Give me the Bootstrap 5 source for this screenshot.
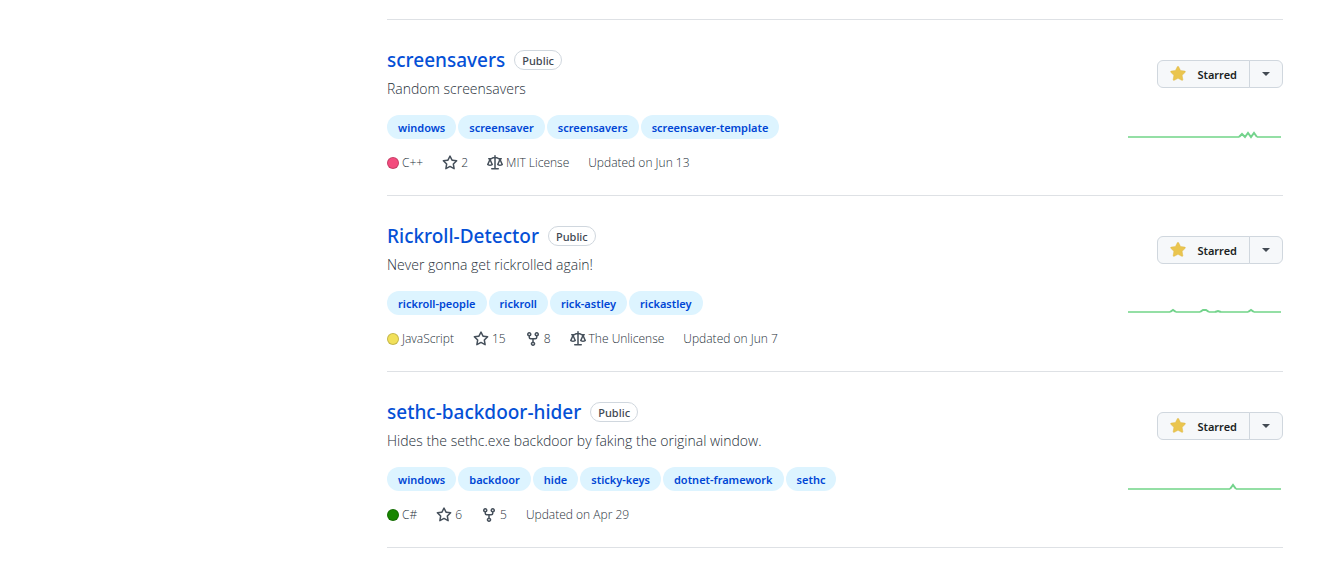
<!DOCTYPE html>
<html lang="en">
<head>
<meta charset="utf-8">
<meta name="viewport" content="width=device-width, initial-scale=1">
<title>Starred repositories</title>
<link href="https://cdn.jsdelivr.net/npm/bootstrap@5.3.0/dist/css/bootstrap.min.css" rel="stylesheet">
<style>
body{font-family:"Open Sans","Noto Sans",sans-serif;font-size:14px;line-height:21px;color:#57606a;background:#fff}
.page-wrap{max-width:1280px;padding:19px 27px 0}
.profile-side{flex:0 0 306px}
.repo-list{border-top:1px solid #dee1e5}
.repo-item{padding:25px 0 23px;border-bottom:1px solid #dee1e5}
.repo-title{gap:9px}
.repo-name{font:500 19px/30px "Noto Sans","Open Sans",sans-serif}
.repo-name a{color:#0550d6;text-decoration:none}
.visibility{font:500 11px/16px "Noto Sans",sans-serif;color:#3f4852;border:1px solid #d0d7de;border-radius:20px;padding:2px 7px 0}
.repo-desc{font-weight:300;color:#27303a;padding:3px 0 16px}
.tag-row{gap:2px}
.topic{font:600 11px/22px "Noto Sans",sans-serif;color:#0046d5;background:#ddf4ff;border-radius:20px;padding:2px 11px 0;text-decoration:none}
.repo-meta{font-size:12px;font-weight:300;line-height:18px;margin-top:15px;gap:19px;color:#27303a}
.repo-meta a{color:inherit;text-decoration:none}
.meta-item{gap:3px}
.meta-item svg{fill:#46505b;width:16px;height:16px}
.lang-dot{width:12px;height:12px;border:1px solid rgba(0,0,0,.18);border-radius:50%}
.star-btn,.caret-btn{font:600 11px/18px "Noto Sans",sans-serif;color:#1b1f24;background:#f6f8fa;border:1px solid #d0d7de;height:28px;padding:0 12px;border-radius:6px}
.star-btn span{padding-top:2px}
.star-btn svg{fill:#eac54f;stroke:#dcb23c;stroke-width:.4;width:16px;height:16px;margin-right:11px}
.caret-btn{width:34px}
.caret-btn svg{fill:#424a53;width:8px;height:4px}
.repo-actions{padding-top:15px}
.spark{width:155px;height:30px;margin-top:24px;fill:none;stroke:#94dfa5;stroke-width:2}
.spark .peak{stroke:#73d38c}
</style>
</head>
<body>
<svg class="d-none" aria-hidden="true">
<symbol id="star" viewBox="0 0 16 16"><path d="M8 .25a.75.75 0 01.673.418l1.882 3.815 4.21.612a.75.75 0 01.416 1.279l-3.046 2.97.719 4.192a.75.75 0 01-1.088.791L8 12.347l-3.766 1.98a.75.75 0 01-1.088-.79l.72-4.194L.818 6.374a.75.75 0 01.416-1.28l4.21-.611L7.327.668A.75.75 0 018 .25zm0 2.445L6.615 5.5a.75.75 0 01-.564.41l-3.097.45 2.24 2.184a.75.75 0 01.216.664l-.528 3.084 2.769-1.456a.75.75 0 01.698 0l2.77 1.456-.53-3.084a.75.75 0 01.216-.664l2.24-2.183-3.096-.45a.75.75 0 01-.564-.41L8 2.694v.001z"/></symbol>
<symbol id="star-fill" viewBox="0 0 16 16"><path d="M8 .25a.75.75 0 01.673.418l1.882 3.815 4.21.612a.75.75 0 01.416 1.279l-3.046 2.97.719 4.192a.75.75 0 01-1.088.791L8 12.347l-3.766 1.98a.75.75 0 01-1.088-.79l.72-4.194L.818 6.374a.75.75 0 01.416-1.28l4.21-.611L7.327.668A.75.75 0 018 .25z"/></symbol>
<symbol id="fork" viewBox="0 0 16 16"><path fill-rule="evenodd" d="M5 3.25a.75.75 0 11-1.5 0 .75.75 0 011.5 0zm0 2.122a2.25 2.25 0 10-1.5 0v.878A2.25 2.25 0 005.75 8.5h1.5v2.128a2.251 2.251 0 101.5 0V8.5h1.5a2.25 2.25 0 002.25-2.25v-.878a2.25 2.25 0 10-1.5 0v.878a.75.75 0 01-.75.75h-4.5A.75.75 0 015 6.25v-.878zm3.75 7.378a.75.75 0 11-1.5 0 .75.75 0 011.5 0zm3-8.75a.75.75 0 100-1.5.75.75 0 000 1.5z"/></symbol>
<symbol id="law" viewBox="0 0 16 16"><path fill-rule="evenodd" d="M8.75.75a.75.75 0 00-1.5 0V2h-.984c-.305 0-.604.08-.869.23l-1.288.737A.25.25 0 013.984 3H1.75a.75.75 0 000 1.5h.428L.066 9.192a.75.75 0 00.154.838l.53-.53-.53.53v.001l.002.002.002.002.006.006.016.015.045.04a3.514 3.514 0 00.686.45A4.492 4.492 0 003 11c.88 0 1.556-.22 2.023-.454a3.515 3.515 0 00.686-.45l.045-.04.016-.015.006-.006.002-.002.001-.002L5.25 9.5l.53.53a.75.75 0 00.154-.838L3.822 4.5h.162c.305 0 .604-.08.869-.23l1.289-.737a.25.25 0 01.124-.033h.984V13h-2.5a.75.75 0 000 1.5h6.5a.75.75 0 000-1.5h-2.5V3.5h.984a.25.25 0 01.124.033l1.29.736c.264.152.563.231.868.231h.162l-2.112 4.692a.75.75 0 00.154.838l.53-.53-.53.53v.001l.002.002.002.002.006.006.016.015.045.04a3.517 3.517 0 00.686.45A4.492 4.492 0 0013 11c.88 0 1.556-.22 2.023-.454a3.512 3.512 0 00.686-.45l.045-.04.01-.01.006-.005.006-.006.002-.002.001-.002-.529-.531.53.53a.75.75 0 00.154-.838L13.823 4.5h.427a.75.75 0 000-1.5h-2.234a.25.25 0 01-.124-.033l-1.29-.736A1.75 1.75 0 009.735 2H8.75V.75zM1.695 9.227c.285.135.718.273 1.305.273s1.02-.138 1.305-.273L3 6.327l-1.305 2.9zm10 0c.285.135.718.273 1.305.273s1.02-.138 1.305-.273L13 6.327l-1.305 2.9z"/></symbol>
<symbol id="caret" viewBox="0 0 8 4"><path d="M0 0h8L4 4z"/></symbol>
</svg>

<div class="container-fluid page-wrap d-flex gap-4">
<aside class="profile-side d-none d-lg-block"></aside>
<main class="flex-grow-1">
<ul class="repo-list list-unstyled mb-0">

<li class="repo-item d-flex justify-content-between">
<div>
<div class="repo-title d-flex align-items-center"><h3 class="repo-name mb-0"><a href="#">screensavers</a></h3><span class="visibility">Public</span></div>
<p class="repo-desc mb-0">Random screensavers</p>
<div class="tag-row d-flex flex-wrap"><a class="topic" href="#">windows</a><a class="topic" href="#">screensaver</a><a class="topic" href="#">screensavers</a><a class="topic" href="#">screensaver-template</a></div>
<div class="repo-meta d-flex flex-wrap">
<span class="meta-item d-flex align-items-center"><span class="lang-dot" style="background:#f34b7d"></span>C++</span>
<a class="meta-item d-flex align-items-center" href="#"><svg><use href="#star"/></svg>2</a>
<span class="meta-item d-flex align-items-center"><svg><use href="#law"/></svg>MIT License</span>
<span>Updated on Jun 13</span>
</div>
</div>
<div class="repo-actions d-flex flex-column align-items-end">
<div class="btn-group"><button type="button" class="btn star-btn d-flex align-items-center"><svg><use href="#star-fill"/></svg><span>Starred</span></button><button type="button" class="btn caret-btn d-flex align-items-center justify-content-center" aria-label="Add to list"><svg><use href="#caret"/></svg></button></div>
<svg class="spark" viewBox="0 0 155 30"><path d="M0 25H111M129 25H153"/><path class="peak" d="M111 25L114 22L117 25L120 21L123 25L126 21L129 25"/></svg>
</div>
</li>

<li class="repo-item d-flex justify-content-between">
<div>
<div class="repo-title d-flex align-items-center"><h3 class="repo-name mb-0"><a href="#">Rickroll-Detector</a></h3><span class="visibility">Public</span></div>
<p class="repo-desc mb-0">Never gonna get rickrolled again!</p>
<div class="tag-row d-flex flex-wrap"><a class="topic" href="#">rickroll-people</a><a class="topic" href="#">rickroll</a><a class="topic" href="#">rick-astley</a><a class="topic" href="#">rickastley</a></div>
<div class="repo-meta d-flex flex-wrap">
<span class="meta-item d-flex align-items-center"><span class="lang-dot" style="background:#f1e05a"></span>JavaScript</span>
<a class="meta-item d-flex align-items-center" href="#"><svg><use href="#star"/></svg>15</a>
<a class="meta-item d-flex align-items-center" href="#"><svg><use href="#fork"/></svg>8</a>
<span class="meta-item d-flex align-items-center"><svg><use href="#law"/></svg>The Unlicense</span>
<span>Updated on Jun 7</span>
</div>
</div>
<div class="repo-actions d-flex flex-column align-items-end">
<div class="btn-group"><button type="button" class="btn star-btn d-flex align-items-center"><svg><use href="#star-fill"/></svg><span>Starred</span></button><button type="button" class="btn caret-btn d-flex align-items-center justify-content-center" aria-label="Add to list"><svg><use href="#caret"/></svg></button></div>
<svg class="spark" viewBox="0 0 155 30"><path d="M0 24H42M48 24H72M81 24H87M93 24H120M126 24H153"/><path class="peak" d="M42 24L45 22L48 24M72 24L75 22H78L81 24M87 24L90 23L93 24M120 24L123 22L126 24"/></svg>
</div>
</li>

<li class="repo-item d-flex justify-content-between">
<div>
<div class="repo-title d-flex align-items-center"><h3 class="repo-name mb-0"><a href="#">sethc-backdoor-hider</a></h3><span class="visibility">Public</span></div>
<p class="repo-desc mb-0">Hides the sethc.exe backdoor by faking the original window.</p>
<div class="tag-row d-flex flex-wrap"><a class="topic" href="#">windows</a><a class="topic" href="#">backdoor</a><a class="topic" href="#">hide</a><a class="topic" href="#">sticky-keys</a><a class="topic" href="#">dotnet-framework</a><a class="topic" href="#">sethc</a></div>
<div class="repo-meta d-flex flex-wrap">
<span class="meta-item d-flex align-items-center"><span class="lang-dot" style="background:#178600"></span>C#</span>
<a class="meta-item d-flex align-items-center" href="#"><svg><use href="#star"/></svg>6</a>
<a class="meta-item d-flex align-items-center" href="#"><svg><use href="#fork"/></svg>5</a>
<span>Updated on Apr 29</span>
</div>
</div>
<div class="repo-actions d-flex flex-column align-items-end">
<div class="btn-group"><button type="button" class="btn star-btn d-flex align-items-center"><svg><use href="#star-fill"/></svg><span>Starred</span></button><button type="button" class="btn caret-btn d-flex align-items-center justify-content-center" aria-label="Add to list"><svg><use href="#caret"/></svg></button></div>
<svg class="spark" viewBox="0 0 155 30"><path d="M0 25H102M108 25H153"/><path class="peak" d="M102 25L105 21L108 25"/></svg>
</div>
</li>

</ul>
</main>
</div>
<script src="https://cdn.jsdelivr.net/npm/bootstrap@5.3.0/dist/js/bootstrap.bundle.min.js"></script>
</body>
</html>
